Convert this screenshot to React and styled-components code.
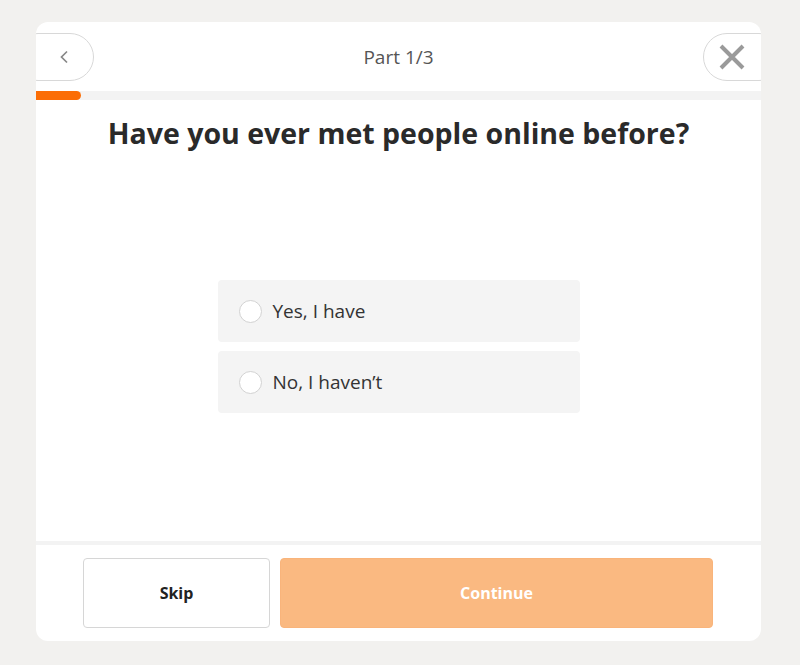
import React, { useState } from 'react'
import styled, { createGlobalStyle } from 'styled-components'

const Global = createGlobalStyle`
  body {
    margin: 0;
    background: #f2f1ef;
    font-family: "Open Sans", "Liberation Sans", sans-serif;
  }
`

const Card = styled.div`
  margin: 22px 0 0 36px;
  width: 725px;
  height: 619px;
  background: #fff;
  border-radius: 12px;
  overflow: hidden;
  display: flex;
  flex-direction: column;
`

const Header = styled.div`
  height: 69px;
  display: flex;
  align-items: center;
  justify-content: space-between;
`

const Pill = styled.button`
  width: 80px;
  height: 48px;
  box-sizing: border-box;
  border: 1px solid #d8d8d8;
  background: #fff;
  border-radius: 24px;
  display: flex;
  align-items: center;
  justify-content: ${({ side }) => (side === 'left' ? 'flex-end' : 'flex-start')};
  padding: ${({ side }) => (side === 'left' ? '0 24px 0 0' : '0 0 0 14px')};
  margin: ${({ side }) => (side === 'left' ? '0 0 0 -22px' : '0 -22px 0 0')};
  cursor: pointer;
`

const PartLabel = styled.div`
  font-size: 19px;
  color: #555;
`

const Track = styled.div`
  height: 9px;
  background: #f3f3f3;
`

const Fill = styled.div`
  height: 100%;
  background: #fb6d05;
  border-radius: 0 5px 5px 0;
`

const Body = styled.div`
  flex: 1;
  padding-top: 14px;
  display: flex;
  flex-direction: column;
  align-items: center;
`

const Title = styled.h1`
  margin: 0;
  font-size: 28.5px;
  line-height: 38px;
  font-weight: 700;
  color: #2a2a2a;
`

const Options = styled.div`
  margin-top: 128px;
  width: 362px;
  display: flex;
  flex-direction: column;
  gap: 9px;
`

const Option = styled.label`
  height: 62px;
  background: #f4f4f4;
  border-radius: 4px;
  display: flex;
  align-items: center;
  padding-left: 21px;
  gap: 11px;
  font-size: 19px;
  color: #333;
  cursor: pointer;
`

const Radio = styled.span`
  width: 23px;
  height: 23px;
  border-radius: 50%;
  border: 1px solid #d2d2d2;
  background: #fff;
  box-sizing: border-box;
  display: flex;
  align-items: center;
  justify-content: center;
  &::after {
    content: '';
    width: 10px;
    height: 10px;
    border-radius: 50%;
    background: ${({ checked }) => (checked ? '#fb6d05' : 'transparent')};
  }
`

const Footer = styled.div`
  border-top: 4px solid #f3f3f3;
  padding: 13px 48px 13px 47px;
  display: flex;
  gap: 10px;
`

const Button = styled.button`
  height: 70px;
  border-radius: 4px;
  font-family: inherit;
  font-size: 16px;
  font-weight: 700;
  box-sizing: border-box;
  cursor: pointer;
  width: ${({ primary }) => (primary ? '433px' : '187px')};
  background: ${({ primary }) => (primary ? '#fab981' : '#fff')};
  color: ${({ primary }) => (primary ? '#fff' : '#222')};
  border: 1px solid ${({ primary }) => (primary ? '#f9b47b' : '#d6d6d6')};
`

const options = ['Yes, I have', 'No, I haven\u2019t']

const App = () => {
  const [picked, setPicked] = useState(null)
  return (
    <>
      <Global />
      <Card>
        <Header>
          <Pill side="left">
            <svg width="10" height="14" viewBox="0 0 10 14">
              <path d="M8 1.5 L2.5 7 L8 12.5" fill="none" stroke="#888" strokeWidth="1.7" />
            </svg>
          </Pill>
          <PartLabel>Part 1/3</PartLabel>
          <Pill side="right">
            <svg width="28" height="28" viewBox="0 0 28 28">
              <path d="M3 3 L25 25 M25 3 L3 25" stroke="#9a9a9a" strokeWidth="4" />
            </svg>
          </Pill>
        </Header>
        <Track>
          <Fill style={{ width: '45px' }} />
        </Track>
        <Body>
          <Title>Have you ever met people online before?</Title>
          <Options>
            {options.map((o, i) => (
              <Option key={o} onClick={() => setPicked(i)}>
                <Radio checked={picked === i} />
                {o}
              </Option>
            ))}
          </Options>
        </Body>
        <Footer>
          <Button>Skip</Button>
          <Button primary>Continue</Button>
        </Footer>
      </Card>
    </>
  )
}

export default App
